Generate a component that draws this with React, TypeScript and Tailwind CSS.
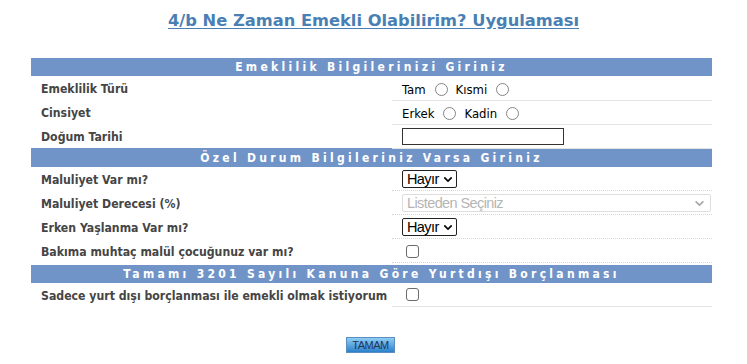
import React from 'react';

const font = "font-['Tahoma','DejaVu_Sans_Condensed','DejaVu_Sans',sans-serif]";

const Chevron: React.FC<{ className?: string }> = ({ className }) => (
  <svg viewBox="0 0 10 6" className={className} fill="none" stroke="currentColor" strokeWidth="2" strokeLinecap="round" strokeLinejoin="round">
    <path d="M1 1l4 4 4-4" />
  </svg>
);

const Radio: React.FC<{ name: string }> = ({ name }) => (
  <input
    type="radio"
    name={name}
    className="appearance-none shrink-0 w-[13px] h-[13px] rounded-full border border-[#858585] bg-white"
  />
);

const Check: React.FC = () => (
  <input
    type="checkbox"
    className="appearance-none shrink-0 w-[13px] h-[13px] rounded-[3px] border border-[#6b6b6b] bg-white ml-[4px]"
  />
);

const HayirSelect: React.FC = () => (
  <div className="relative flex items-center w-[55px] h-[18px] border border-[#222] rounded-[2px] bg-white">
    <span className="pl-[4px] text-[14.5px] leading-none text-black font-['Liberation_Sans',sans-serif] tracking-[-0.6px]">Hayır</span>
    <Chevron className="absolute right-[4px] top-[6px] w-[8px] h-[5px] text-black" />
  </div>
);

const Header: React.FC<{ title: string }> = ({ title }) => (
  <tr>
    <td colSpan={2} className="bg-[#7194c8] text-white text-center font-bold text-[12px] tracking-[3.3px] h-[18px] leading-[18px] p-0">
      {title}
    </td>
  </tr>
);

const Row: React.FC<{ label: string; children: React.ReactNode; dotted?: boolean }> = ({ label, children, dotted }) => (
  <tr>
    <td className="w-[361px] p-0">
      <div className="h-[24px] flex items-center pl-[10px] pt-[3px] font-bold text-[12.2px] text-[#454545] whitespace-nowrap">{label}</div>
    </td>
    <td className={`p-0 border-b ${dotted ? 'border-dotted border-[#d6d6d6]' : 'border-solid border-[#e4e4e4]'}`}>
      <div className="h-[23px] flex items-center pl-[10px] pt-[1px]">{children}</div>
    </td>
  </tr>
);

export default function App() {
  return (
    <div className={`w-[747px] h-[364px] bg-white ${font}`}>
      <h1 className="text-center pt-[11px] text-[16.3px] font-bold leading-[20px] font-['DejaVu_Sans',sans-serif]">
        <a href="#" className="text-[#4a7fb4] underline underline-offset-[2px]">4/b Ne Zaman Emekli Olabilirim? Uygulaması</a>
      </h1>
      <table className="ml-[31px] mt-[27px] w-[681px] border-collapse">
        <tbody>
          <Header title="Emeklilik Bilgilerinizi Giriniz" />
          <Row label="Emeklilik Türü">
            <div className="flex items-center text-[13px] text-black pt-[2px]">
              <span>Tam</span>
              <span className="ml-[9px] flex"><Radio name="tur" /></span>
              <span className="ml-[8px]">Kısmi</span>
              <span className="ml-[9px] flex"><Radio name="tur" /></span>
            </div>
          </Row>
          <Row label="Cinsiyet">
            <div className="flex items-center text-[13px] text-black pt-[2px]">
              <span>Erkek</span>
              <span className="ml-[9px] flex"><Radio name="cins" /></span>
              <span className="ml-[8px]">Kadin</span>
              <span className="ml-[9px] flex"><Radio name="cins" /></span>
            </div>
          </Row>
          <Row label="Doğum Tarihi">
            <input type="text" className="block w-[162px] h-[17px] border border-[#333] bg-white" />
          </Row>
          <Header title="Özel Durum Bilgileriniz Varsa Giriniz" />
          <Row label="Maluliyet Var mı?" dotted>
            <HayirSelect />
          </Row>
          <Row label="Maluliyet Derecesi (%)" dotted>
            <div className="relative flex items-center w-[309px] h-[18px] border border-[#dedede] rounded-[2px] bg-white">
              <span className="pl-[4px] text-[14.5px] leading-none text-[#b5b5b5] font-['Liberation_Sans',sans-serif] tracking-[-0.6px]">Listeden Seçiniz</span>
              <Chevron className="absolute right-[6px] top-[6px] w-[9px] h-[5px] text-[#a8a8a8]" />
            </div>
          </Row>
          <Row label="Erken Yaşlanma Var mı?" dotted>
            <HayirSelect />
          </Row>
          <Row label="Bakıma muhtaç malül çocuğunuz var mı?" dotted>
            <Check />
          </Row>
          <tr><td colSpan={2} className="h-[2px] p-0" /></tr>
          <Header title="Tamamı 3201 Sayılı Kanuna Göre Yurtdışı Borçlanması" />
          <Row label="Sadece yurt dışı borçlanması ile emekli olmak istiyorum">
            <Check />
          </Row>
        </tbody>
      </table>
      <div className="flex justify-center mt-[30px] pr-[6px]">
        <button className="w-[49px] h-[16px] border border-[#5c8fbf] bg-gradient-to-b from-[#8ccdf4] to-[#2a80cb] text-[11px] leading-none text-[#1d3659] font-['Liberation_Sans',sans-serif] tracking-[-0.5px]">
          TAMAM
        </button>
      </div>
    </div>
  );
}
